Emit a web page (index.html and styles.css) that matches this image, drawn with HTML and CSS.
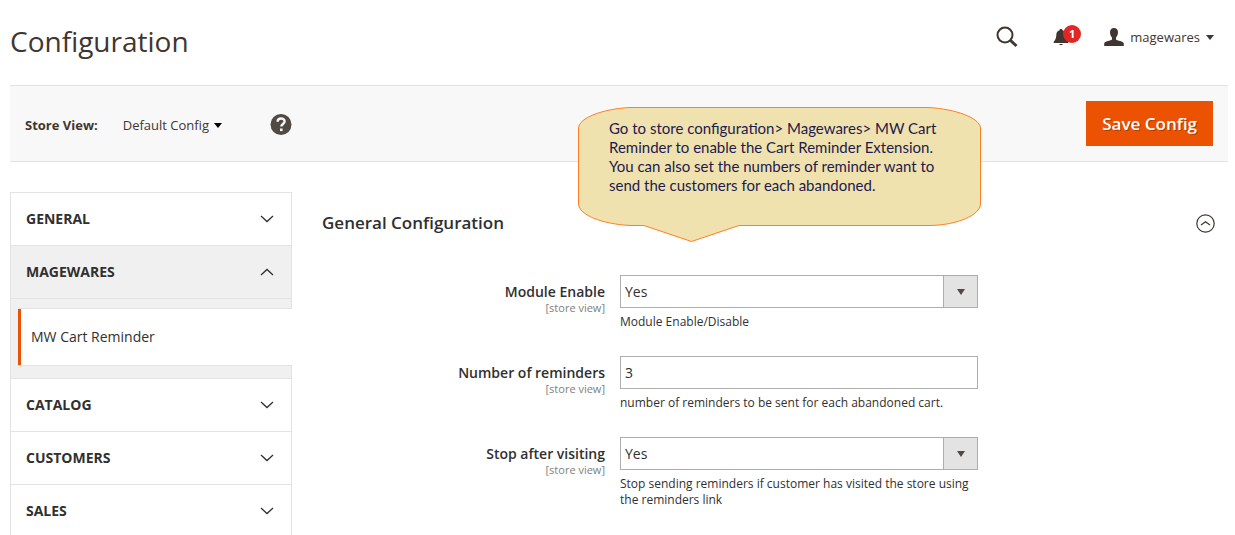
FILE: index.html
```html
<!DOCTYPE html>
<html lang="en">
  <head>
    <meta charset="utf-8">
    <meta name="viewport" content="width=device-width">
    <title>Configuration</title>

    <link rel="stylesheet" href="styles.css">
  </head>

  <body>
    <header class="page-header">
        <h1>Configuration</h1>
        <div class="header-tools">
            <button type="button" class="icon-button" aria-label="Search">
                <svg width="22" height="22" viewBox="0 0 22 22" fill="none" stroke="#41362f">
                    <circle cx="9" cy="9" r="7.5" stroke-width="2"/>
                    <path d="M14 14l6.5 6" stroke-width="3"/>
                </svg>
            </button>
            <button type="button" class="icon-button notifications" aria-label="Notifications">
                <svg width="16" height="18" viewBox="0 0 16 18" fill="#41362f">
                    <path d="M6.5 2.2C6.5 .6 9.500 .6 9.500 2.200 11.800 2.900 12.600 4.500 12.700 7c.1 3 .8 4.800 2.600 6.700V15H.7v-1.300C2.500 11.800 3.200 10 3.300 7c.1-2.500.9-4.100 3.200-4.800z"/>
                    <path d="M6.200 16h3.600c-.3 1.600-3.300 1.600-3.600 0z"/>
                </svg>
                <span class="badge">1</span>
            </button>
            <button type="button" class="account">
                <svg width="20" height="18" viewBox="0 0 20 18" fill="#41362f">
                    <path d="M10 0c2.600 0 4 1.600 4 4.300 0 2.200-.8 4-2 5.200v2c.8 1.300 7.800 1.500 7.800 4V18H.2v-2.500c0-2.500 7-2.700 7.800-4v-2C6.800 8.300 6 6.500 6 4.300 6 1.600 7.400 0 10 0z"/>
                </svg>
                <span>magewares</span>
                <span class="caret"></span>
            </button>
        </div>
    </header>

    <div class="page-actions">
        <div class="store-view">
            <span class="store-label">Store View:</span>
            <button type="button" class="store-switcher">
                Default Config
                <span class="caret"></span>
            </button>
            <button type="button" class="icon-button" aria-label="Help">
                <svg width="22" height="22" viewBox="0 0 22 22">
                    <circle cx="11" cy="10.500" r="10.500" fill="#514943"/>
                    <path d="M7.600 7.800C7.600 3.500 14.600 3.500 14.600 7.400c0 2.600-3.300 2.600-3.300 5.200" fill="none" stroke="#f8f8f8" stroke-width="2.400"/>
                    <path d="M10 14.500h2.600v2.600H10z" fill="#f8f8f8"/>
                </svg>
            </button>
        </div>
        <button type="submit" form="config" class="button">Save Config</button>
    </div>

    <div class="columns">
        <nav class="config-nav">
            <a href="#" class="nav-title">General
                <svg class="chevron" width="14" height="8" viewBox="0 0 14 8"><path d="M1 1l6 5.500L13 1"/></svg>
            </a>
            <a href="#" class="nav-title open">Magewares
                <svg class="chevron" width="14" height="8" viewBox="0 0 14 8"><path d="M1 7l6-5.500L13 7"/></svg>
            </a>
            <div class="nav-items">
                <a href="#" class="current">MW Cart Reminder</a>
            </div>
            <a href="#" class="nav-title">Catalog
                <svg class="chevron" width="14" height="8" viewBox="0 0 14 8"><path d="M1 1l6 5.500L13 1"/></svg>
            </a>
            <a href="#" class="nav-title">Customers
                <svg class="chevron" width="14" height="8" viewBox="0 0 14 8"><path d="M1 1l6 5.500L13 1"/></svg>
            </a>
            <a href="#" class="nav-title">Sales
                <svg class="chevron" width="14" height="8" viewBox="0 0 14 8"><path d="M1 1l6 5.500L13 1"/></svg>
            </a>
        </nav>

        <main class="content">
            <div class="section-head">
                <h2>General Configuration</h2>
                <button type="button" class="icon-button" aria-label="Collapse section">
                    <svg width="20" height="20" viewBox="0 0 20 20" fill="none" stroke="#41362f" stroke-width="1.200">
                        <circle cx="10.500" cy="10.500" r="8.700"/>
                        <path d="M6 12l4.500-3.300L15 12"/>
                    </svg>
                </button>
            </div>

            <form id="config">
                <div class="field">
                    <label for="enable">Module Enable <small>[store view]</small></label>
                    <div class="control">
                        <div class="select">
                            <select id="enable">
                                <option>Yes</option>
                                <option>No</option>
                            </select>
                        </div>
                        <p>Module Enable/Disable</p>
                    </div>
                </div>

                <div class="field">
                    <label for="reminders">Number of reminders <small>[store view]</small></label>
                    <div class="control">
                        <input type="text" id="reminders" value="3">
                        <p>number of reminders to be sent for each abandoned cart.</p>
                    </div>
                </div>

                <div class="field">
                    <label for="stop">Stop after visiting <small>[store view]</small></label>
                    <div class="control">
                        <div class="select">
                            <select id="stop">
                                <option>Yes</option>
                                <option>No</option>
                            </select>
                        </div>
                        <p>Stop sending reminders if customer has visited the store using the reminders link</p>
                    </div>
                </div>
            </form>

            <!-- help bubble, floats over the toolbar -->
            <aside class="callout">
                <svg width="404" height="136" viewBox="0 0 404 136">
                    <path d="M52 .5H350C378 2 402 11 402.500 21V97C402 108 380 118 352 118.500H161L113.500 134.500 66 118.500H52C24 117 1 108 .5 97V21C1 11 24 2 52 .5z" fill="#efe2ae" stroke="#ff7f27"/>
                </svg>
                <p>Go to store configuration&gt; Magewares&gt; MW Cart Reminder to enable the Cart Reminder Extension. You can also set the numbers of reminder want to send the customers for each abandoned.</p>
            </aside>
        </main>
    </div>
  </body>
</html>
```

FILE: styles.css
```css
*, *::before, *::after {
    box-sizing: border-box;
}
body {
    margin: 0;
    padding: 0 7px 0 10px;
    background: #fff;
    color: #303030;
    font: 14px/20px "Open Sans", sans-serif;
}
h1, h2, p {
    margin: 0;
}
a {
    color: inherit;
    text-decoration: none;
}
button {
    padding: 0;
    border: 0;
    background: none;
    color: #41362f;
    font: inherit;
    cursor: pointer;
}
svg {
    display: block;
}
.caret {
    border: solid transparent;
    border-width: 5px 4px 0;
    border-top-color: #000;
}

/* header */
.page-header {
    display: flex;
    justify-content: space-between;
    height: 85px;
    padding-right: 14px;
}
h1 {
    padding-top: 23px;
    color: #41362f;
    font-size: 28px;
    font-weight: 400;
    line-height: 36px;
}
.header-tools {
    display: flex;
    align-items: center;
    gap: 35px;
    height: 74px;
}
.notifications {
    position: relative;
}
.badge {
    position: absolute;
    top: -3px;
    left: 10px;
    width: 18px;
    border-radius: 9px;
    background: #e22626;
    color: #fff;
    font-size: 11px;
    font-weight: 700;
    line-height: 18px;
}
.account {
    display: flex;
    align-items: center;
    gap: 6px;
    font-size: 13px;
}
.account .caret {
    border-top-color: #41362f;
}

/* toolbar */
.page-actions {
    display: flex;
    align-items: center;
    justify-content: space-between;
    padding: 15px;
    border: solid #e3e3e3;
    border-width: 1px 0;
    background: #f8f8f8;
}
.store-view {
    display: flex;
    align-items: center;
    padding-top: 3px;
}
.store-label {
    color: #41362f;
    font-size: 13px;
    font-weight: 700;
}
.store-switcher {
    display: flex;
    align-items: center;
    gap: 5px;
    margin: 0 48px 0 25px;
    font-size: 13px;
}
.button {
    padding: 0 16px;
    background: #eb5202;
    color: #fff;
    font-size: 17px;
    font-weight: 600;
    line-height: 45px;
    text-shadow: 1px 1px 0 rgba(0, 0, 0, .25);
}

/* sidebar */
.columns {
    display: flex;
    gap: 30px;
    padding-top: 30px;
}
.config-nav {
    flex: 0 0 282px;
    border: solid #e3e3e3;
    border-width: 1px 1px 0;
}
.nav-title {
    display: flex;
    align-items: center;
    justify-content: space-between;
    height: 53px;
    padding: 0 17px 0 15px;
    border-bottom: 1px solid #e3e3e3;
    font-weight: 700;
    text-transform: uppercase;
}
.open, .nav-items {
    background: #f0f0f0;
}
.chevron {
    fill: none;
    stroke: #303030;
    stroke-width: 1.3;
}
.nav-items {
    padding: 9px 0 12px 7px;
    border-bottom: 1px solid #e3e3e3;
}
.current {
    display: block;
    margin-right: -1px;
    padding: 18px 10px 18px 13px;
    border: solid #e3e3e3;
    border-width: 1px 0;
    background: #fff;
    box-shadow: inset 3px 0 #eb5202;
    font-weight: 500;
}

/* settings */
.content {
    position: relative;
    flex: 1;
    min-width: 0;
}
.section-head {
    display: flex;
    align-items: center;
    justify-content: space-between;
    height: 62px;
    padding-right: 13px;
}
h2 {
    font-size: 17px;
    font-weight: 600;
}
form {
    padding-top: 21px;
}
.field {
    display: grid;
    grid-template-columns: 283px minmax(0, 358px);
    gap: 15px;
    margin-bottom: 26px;
}
label {
    padding-top: 9px;
    font-weight: 600;
    line-height: 16px;
    text-align: right;
}
small {
    display: block;
    color: #808080;
    font-size: 11px;
    font-weight: 400;
    line-height: 15px;
}
input, select {
    display: block;
    width: 100%;
    height: 33px;
    padding: 0 4px;
    border: 1px solid #adadad;
    border-radius: 0;
    background: #fff;
    color: #303030;
    font: 14px "Open Sans", sans-serif;
    appearance: none;
}
.select {
    position: relative;
}
.select::before {
    content: "";
    position: absolute;
    top: 0;
    right: 0;
    width: 35px;
    height: 33px;
    border: 1px solid #adadad;
    background: #e3e3e3;
    pointer-events: none;
}
.select::after {
    content: "";
    position: absolute;
    top: 14px;
    right: 13px;
    border: solid transparent;
    border-width: 6px 4px 0;
    border-top-color: #514943;
    pointer-events: none;
}
.control p {
    padding-top: 6px;
    font-size: 12px;
    line-height: 16px;
}

/* help bubble */
.callout {
    position: absolute;
    top: -85px;
    left: 256px;
    width: 404px;
    color: #1f1a4f;
}
.callout p {
    position: absolute;
    top: 12px;
    left: 31px;
    width: 340px;
    font: 15px/19px Lato, sans-serif;
}
```
